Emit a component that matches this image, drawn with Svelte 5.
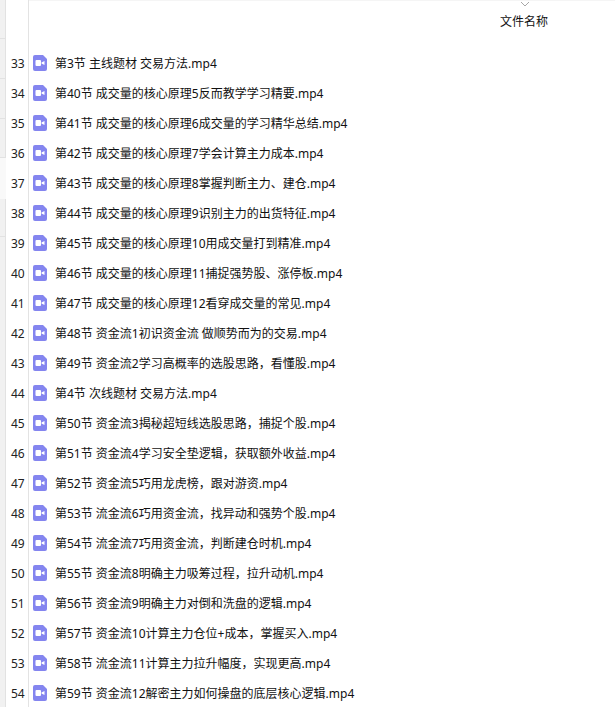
<script>
  const files = [
    [33, '第3节 主线题材 交易方法.mp4'],
    [34, '第40节 成交量的核心原理5反而教学学习精要.mp4'],
    [35, '第41节 成交量的核心原理6成交量的学习精华总结.mp4'],
    [36, '第42节 成交量的核心原理7学会计算主力成本.mp4'],
    [37, '第43节 成交量的核心原理8掌握判断主力、建仓.mp4'],
    [38, '第44节 成交量的核心原理9识别主力的出货特征.mp4'],
    [39, '第45节 成交量的核心原理10用成交量打到精准.mp4'],
    [40, '第46节 成交量的核心原理11捕捉强势股、涨停板.mp4'],
    [41, '第47节 成交量的核心原理12看穿成交量的常见.mp4'],
    [42, '第48节 资金流1初识资金流 做顺势而为的交易.mp4'],
    [43, '第49节 资金流2学习高概率的选股思路，看懂股.mp4'],
    [44, '第4节 次线题材 交易方法.mp4'],
    [45, '第50节 资金流3揭秘超短线选股思路，捕捉个股.mp4'],
    [46, '第51节 资金流4学习安全垫逻辑，获取额外收益.mp4'],
    [47, '第52节 资金流5巧用龙虎榜，跟对游资.mp4'],
    [48, '第53节 流金流6巧用资金流，找异动和强势个股.mp4'],
    [49, '第54节 流金流7巧用资金流，判断建仓时机.mp4'],
    [50, '第55节 资金流8明确主力吸筹过程，拉升动机.mp4'],
    [51, '第56节 资金流9明确主力对倒和洗盘的逻辑.mp4'],
    [52, '第57节 资金流10计算主力仓位+成本，掌握买入.mp4'],
    [53, '第58节 流金流11计算主力拉升幅度，实现更高.mp4'],
    [54, '第59节 资金流12解密主力如何操盘的底层核心逻辑.mp4']
  ]
</script>

<div class="sheet">
  <div class="strip">
    <div class="seg s1"></div>
    <div class="seg s2"></div>
    <div class="seg s2"></div>
    <div class="seg s3"></div>
    <div class="seg light"></div>
    <div class="seg s4"></div>
    <div class="seg rest"></div>
  </div>
  <div class="gutter"></div>
  <div class="main">
    <div class="top">
      <svg class="chevron" width="10" height="6" viewBox="0 0 10 6"><path d="M1 1l4 4 4-4" fill="none" stroke="#a8a8a8" /></svg>
      <span class="heading">文件名称</span>
    </div>
    <ul class="list">
      {#each files as [num, name]}
        <li class="row">
          <span class="num">{num}</span>
          <svg class="icon" width="14" height="16" viewBox="0 0 14 16">
            <path d="M2 0h8l4 4v10a2 2 0 0 1-2 2H2a2 2 0 0 1-2-2V2a2 2 0 0 1 2-2z" fill="#8485ef" />
            <rect x="2.5" y="5" width="5.5" height="6" rx="1" fill="#fff" />
            <path d="M8.5 7.5l3-1.6v4.2l-3-1.6z" fill="#fff" />
          </svg>
          <span class="name">{name}</span>
        </li>
      {/each}
    </ul>
  </div>
</div>

<style>
  :global(body) {
    background: #fff;
    overflow: hidden;
  }
  .sheet {
    display: flex;
    height: 707px;
    overflow: hidden;
    font-family: "Noto Sans", "Noto Sans CJK SC", sans-serif;
    font-size: 12px;
    color: #111;
  }
  .strip {
    width: 6px;
    flex: none;
    display: flex;
    flex-direction: column;
  }
  .seg {
    box-sizing: border-box;
    background: #f1f1f1;
    border-right: 1px solid #e2e2e2;
    border-bottom: 1px solid #e2e2e2;
  }
  .s1 { height: 39px; }
  .s2 { height: 40px; }
  .s3 { height: 39px; }
  .s4 { height: 38px; }
  .light {
    height: 41px;
    background: #f9f9f9;
    border: 0;
  }
  .rest {
    flex: 1;
    border-bottom: 0;
  }
  .gutter {
    width: 22px;
    flex: none;
    border-right: 1px solid #e3e3e3;
  }
  .main {
    flex: 1;
  }
  .top {
    height: 48px;
    border-top: 1px solid #f5f5f5;
    position: relative;
    padding-left: 471px;
    box-sizing: border-box;
  }
  .chevron {
    position: absolute;
    left: 491px;
    top: 0;
  }
  .heading {
    display: block;
    padding-top: 13px;
    line-height: 16px;
  }
  .list {
    list-style: none;
    margin: 0 0 0 -29px;
    padding: 0;
  }
  .row {
    display: flex;
    align-items: center;
    height: 30px;
  }
  .num {
    width: 33px;
    flex: none;
    padding-left: 11px;
    box-sizing: border-box;
    color: #222;
  }
  .icon {
    flex: none;
    margin-right: 8px;
  }
  .name {
    white-space: nowrap;
  }
</style>
